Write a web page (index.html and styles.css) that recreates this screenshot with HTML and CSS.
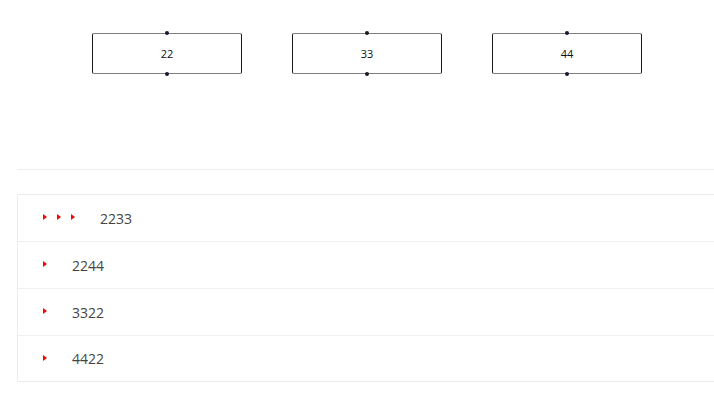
FILE: index.html
```html
<!DOCTYPE html>
<html>
<head>
<meta charset="utf-8">
<link rel="stylesheet" href="styles.css">
</head>
<body>
<div class="canvas">
  <div class="node"><span class="port port-top"></span>22<span class="port port-bottom"></span></div>
  <div class="node"><span class="port port-top"></span>33<span class="port port-bottom"></span></div>
  <div class="node"><span class="port port-top"></span>44<span class="port port-bottom"></span></div>
</div>
<div class="divider"></div>
<div class="list">
  <div class="row"><span class="arrows"><i class="tri"></i><i class="tri"></i><i class="tri"></i></span><span class="label">2233</span></div>
  <div class="row"><span class="arrows"><i class="tri"></i></span><span class="label">2244</span></div>
  <div class="row"><span class="arrows"><i class="tri"></i></span><span class="label">3322</span></div>
  <div class="row"><span class="arrows"><i class="tri"></i></span><span class="label">4422</span></div>
</div>
</body>
</html>
```
FILE: styles.css
```css
html, body {
  margin: 0;
  padding: 0;
  background: #fff;
  font-family: "Open Sans", "Noto Sans", sans-serif;
}
.canvas {
  display: flex;
  align-items: flex-start;
  gap: 50px;
  padding: 33px 0 0 92px;
  height: 169px;
  box-sizing: border-box;
}
.node {
  position: relative;
  width: 150px;
  height: 41px;
  box-sizing: border-box;
  border: 1px solid #1a1a1a;
  border-top-color: #7d7d7d;
  border-bottom-color: #7d7d7d;
  border-radius: 2px;
  display: flex;
  align-items: center;
  justify-content: center;
  font-size: 11px;
  color: #111;
}
.port {
  position: absolute;
  left: 72px;
  width: 4px;
  height: 4px;
  border-radius: 50%;
  background: #1a1a2a;
}
.port-top { top: -3px; }
.port-bottom { bottom: -3px; }
.divider {
  margin-left: 17px;
  border-top: 1px solid #eeeeee;
}
.list {
  margin: 24px 0 0 17px;
  border: 1px solid #ececec;
  border-right: none;
  border-radius: 2px 0 0 2px;
}
.row {
  display: flex;
  align-items: center;
  height: 46px;
  padding-left: 22px;
  border-top: 1px solid #efefef;
}
.row:first-child { border-top: none; }
.row:last-child { height: 45px; }
.arrows { display: flex; }
.tri {
  display: block;
  width: 14px;
  height: 6px;
  position: relative;
}
.tri::before {
  content: "";
  position: absolute;
  left: 3px;
  top: -1px;
  border-left: 4px solid #ff0000;
  border-top: 3px solid transparent;
  border-bottom: 3px solid transparent;
}
.label {
  margin-left: 18px;
  font-size: 14px;
  color: #444;
}
```
